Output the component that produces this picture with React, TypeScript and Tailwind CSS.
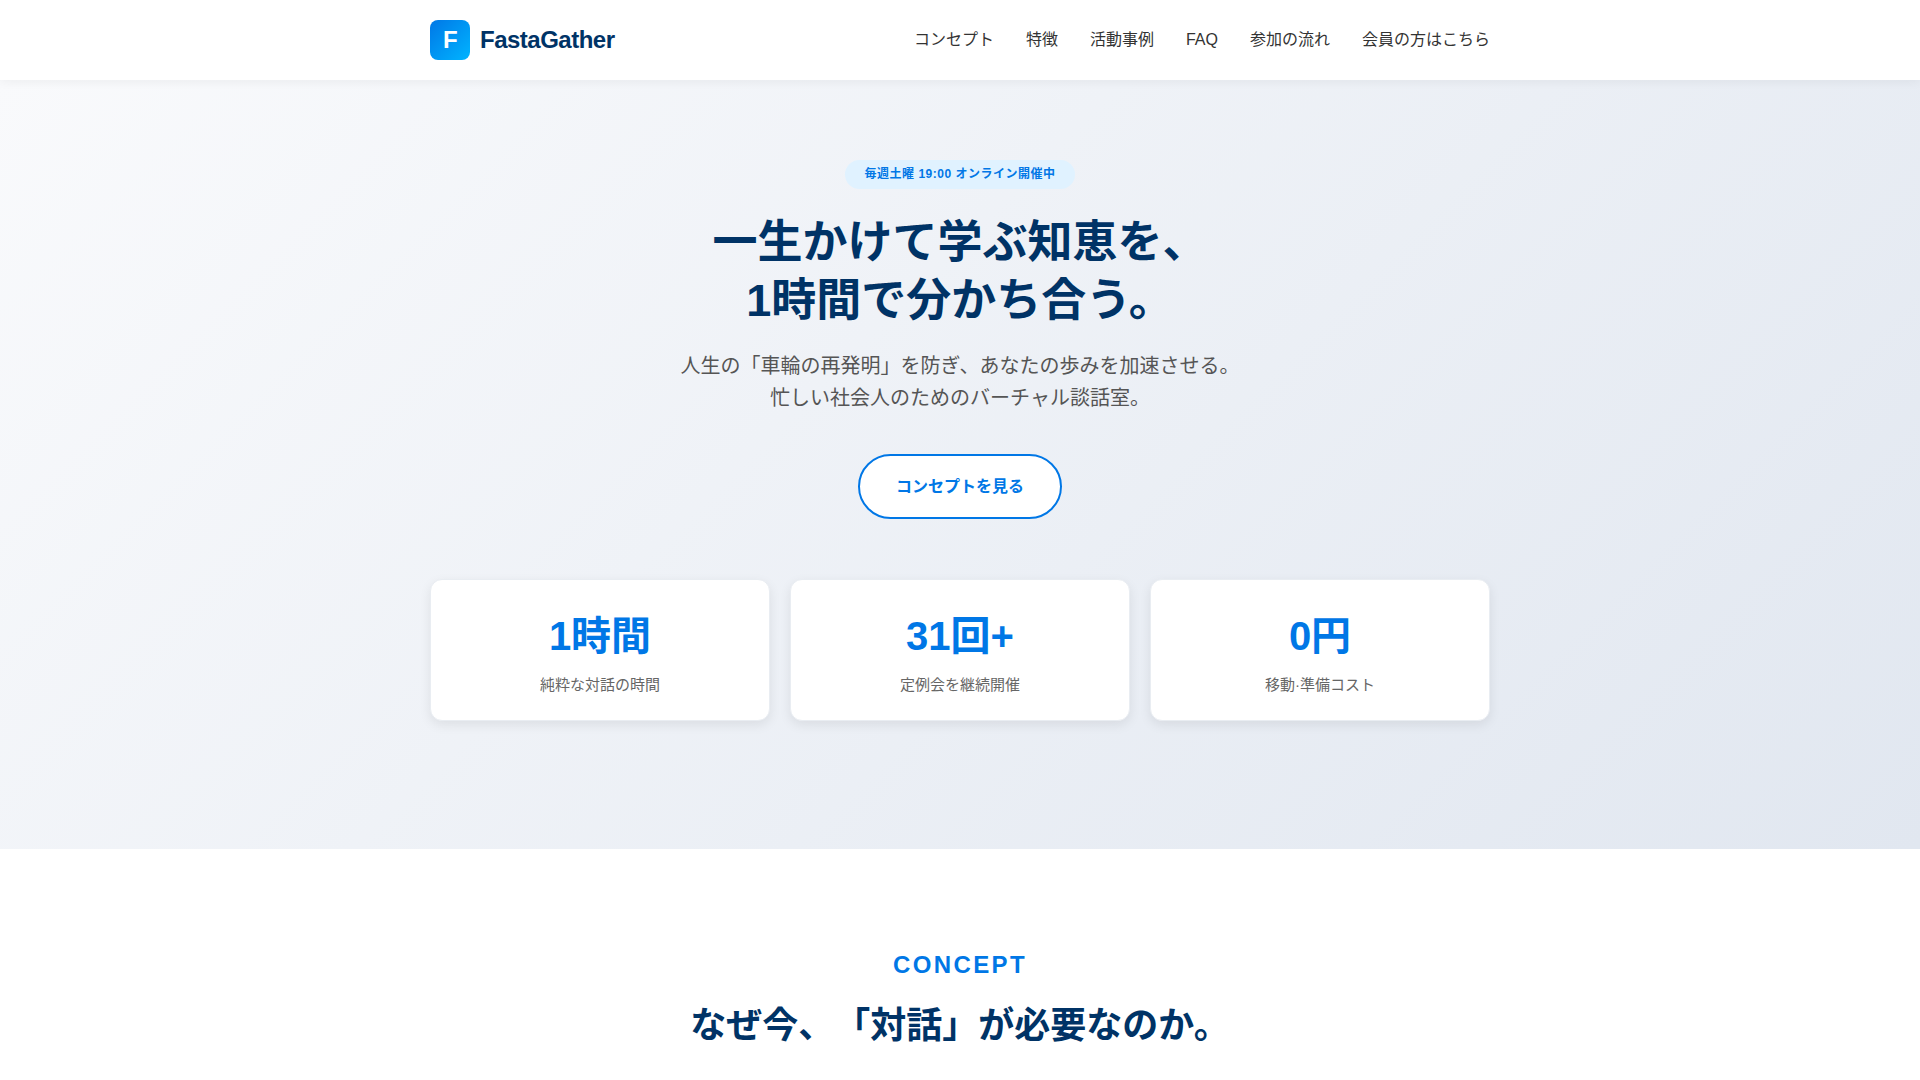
import React from 'react';

const NAV_LINKS = [
   { label: 'コンセプト', href: '#concept' },
   { label: '特徴', href: '#features' },
   { label: '活動事例', href: '#activities' },
   { label: 'FAQ', href: '#faq' },
   { label: '参加の流れ', href: '#flow' },
   { label: '会員の方はこちら', href: '#members' },
];

const STATS = [
   { value: '1時間', label: '純粋な対話の時間' },
   { value: '31回+', label: '定例会を継続開催' },
   { value: '0円', label: '移動·準備コスト' },
];

function Header() {
   return (
      <header className="sticky top-0 z-10 bg-white shadow-[0_2px_10px_rgba(0,0,0,0.05)]">
         <div className="mx-auto flex h-20 max-w-[1100px] items-center justify-between px-5">
            <a href="#top" className="flex items-center gap-2.5 text-2xl font-bold tracking-[-0.5px] text-[#003366]">
               <span className="flex h-10 w-10 items-center justify-center rounded-lg bg-linear-135 from-[#0077e6] to-[#00b4ff] text-white">F</span>
               FastaGather
            </a>
            <nav className="flex gap-8">
               {NAV_LINKS.map((link) => (
                  <a key={link.href} href={link.href} className="hover:text-[#0077e6]">{link.label}</a>
               ))}
            </nav>
         </div>
      </header>
   );
}

function Hero() {
   return (
      <section className="bg-linear-135 from-[#f9fafc] to-[#e1e7f0] pt-20 pb-32 text-center">
         <div className="mx-auto max-w-[1100px] px-5">
            <span className="inline-block rounded-full bg-[#e0f2ff] px-5 py-[5px] text-xs leading-[19px] font-bold tracking-[0.5px] text-[#0077e6]">
               毎週土曜 19:00 オンライン開催中
            </span>
            <h1 className="mt-[25px] text-[45px] leading-[58px] font-bold text-[#003366]">
               一生かけて学ぶ知恵を、<br />1時間で分かち合う。
            </h1>
            <p className="mt-5 text-xl leading-8 text-[#555555]">
               人生の「車輪の再発明」を防ぎ、あなたの歩みを加速させる。<br />忙しい社会人のためのバーチャル談話室。
            </p>
            <a href="#concept" className="mt-10 inline-block rounded-full border-2 border-[#0077e6] bg-white px-9 py-[18px] leading-[25px] font-bold text-[#0077e6]">
               コンセプトを見る
            </a>
            <div className="mt-15 grid grid-cols-3 gap-5">
               {STATS.map((stat) => (
                  <div key={stat.value} className="rounded-xl border border-[#e9edf2] bg-white p-6 shadow-[0_4px_12px_rgba(0,0,0,0.08)]">
                     <div className="text-[40px] leading-16 font-bold text-[#0077e6]">{stat.value}</div>
                     <div className="mt-[5px] text-[15px] leading-[23px] text-[#666666]">{stat.label}</div>
                  </div>
               ))}
            </div>
         </div>
      </section>
   );
}

function Concept() {
   return (
      <section id="concept" className="bg-white py-24 text-center">
         <div className="mx-auto max-w-[1100px] px-5">
            <p className="text-2xl leading-10 font-bold tracking-widest text-[#0077e6]">CONCEPT</p>
            <h2 className="mt-3 text-4xl leading-[58px] font-bold text-[#003366]">なぜ今、「対話」が必要なのか。</h2>
         </div>
      </section>
   );
}

export default function App() {
   return (
      <div id="top" className="min-h-screen bg-white font-['Liberation_Sans','Noto_Sans_CJK_JP',sans-serif] text-base leading-[26px] text-[#333333] [text-spacing-trim:space-all]">
         <Header />
         <main>
            <Hero />
            <Concept />
         </main>
      </div>
   );
}
